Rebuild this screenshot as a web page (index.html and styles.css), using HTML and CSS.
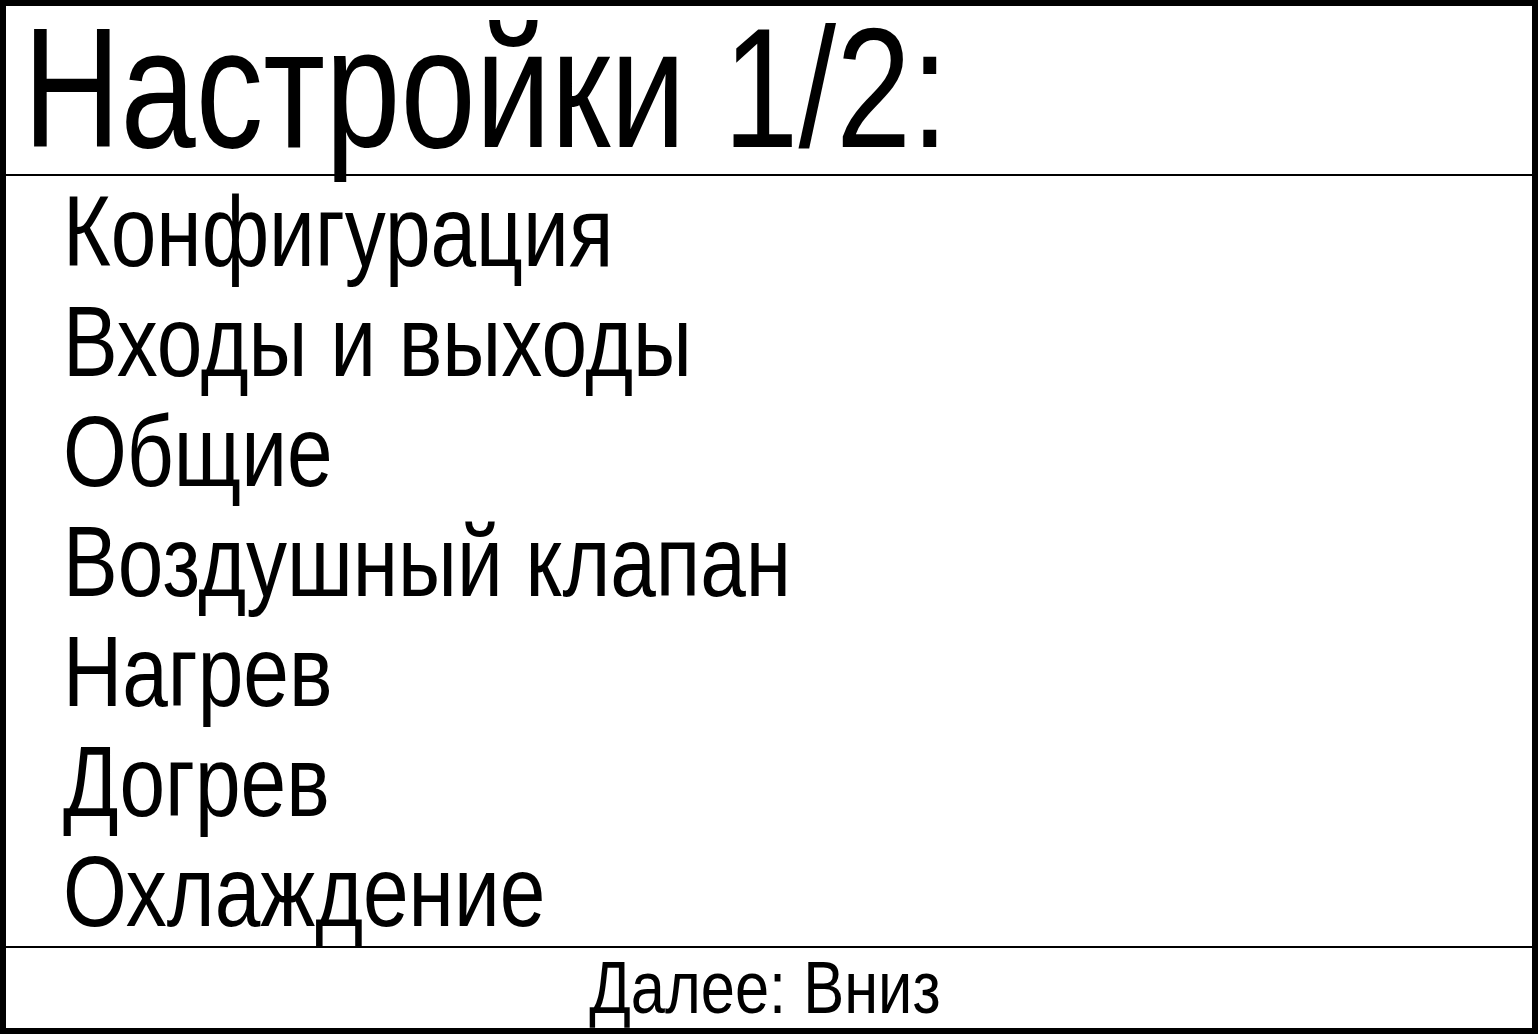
FILE: index.html
```html
<!DOCTYPE html>
<html lang="ru">
<head>
    <meta charset="UTF-8">
    <title>Настройки</title>
    <link rel="stylesheet" href="styles.css">
</head>
<body>
    <div class="screen">
        <div class="title"><span class="narrow">Настройки 1/2:</span></div>
        <ul class="menu">
            <li>Конфигурация</li>
            <li>Входы и выходы</li>
            <li>Общие</li>
            <li>Воздушный клапан</li>
            <li>Нагрев</li>
            <li>Догрев</li>
            <li>Охлаждение</li>
        </ul>
        <div class="hint">Далее: Вниз</div>
    </div>
</body>
</html>
```

FILE: styles.css
```css
/* no narrow face installed, so Arial-width text gets squeezed by hand */
body {
    margin: 0;
    background: #fff;
    color: #000;
    font-family: 'Liberation Sans', Arial, sans-serif;
}

.screen {
    box-sizing: border-box;
    width: 1538px;
    height: 1034px;
    border: 6px solid #000;
    display: flex;
    flex-direction: column;
}

.title {
    height: 168px;
    line-height: 164px;
    font-size: 170px;
    padding-left: 17px;
    border-bottom: 2px solid #000;
    white-space: nowrap;
}

.narrow {
    display: inline-block;
    transform: scaleX(0.795);
    transform-origin: left center;
}

.menu {
    flex: 1;
    margin: 0;
    padding: 0 0 0 57px;
    list-style: none;
    font-size: 100px;
    line-height: 110px;
    border-bottom: 2px solid #000;
}

.menu li {
    white-space: nowrap;
    transform: scaleX(0.82);
    transform-origin: left center;
}

.hint {
    height: 80px;
    line-height: 80px;
    font-size: 74px;
    text-align: center;
    padding-right: 10px;
    transform: scaleX(0.83);
}
```
